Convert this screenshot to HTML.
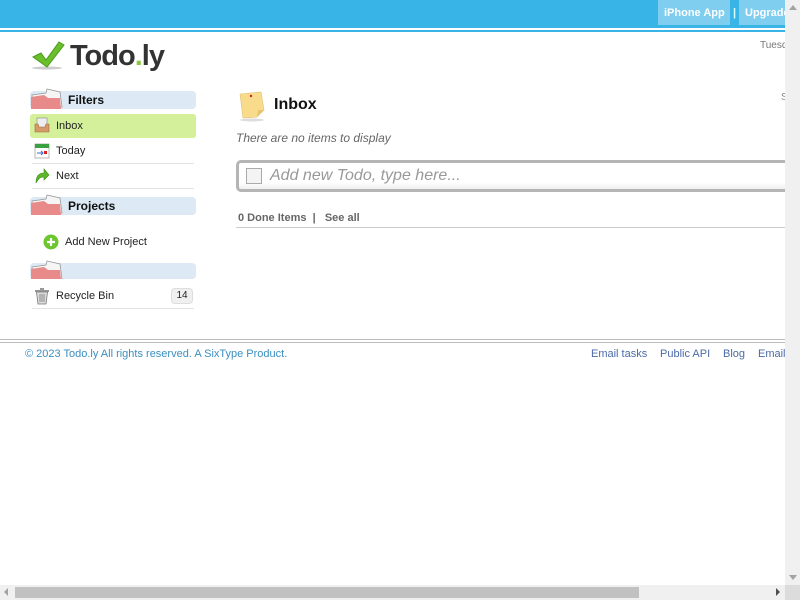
<!DOCTYPE html>
<html><head><meta charset="utf-8"><style>
*{margin:0;padding:0;box-sizing:border-box}
body{width:800px;height:600px;overflow:hidden;position:relative;background:#fff;font-family:"Liberation Sans",sans-serif;font-size:11px;color:#222}
.a{position:absolute;white-space:nowrap}
.hdr{position:absolute;left:30px;width:166px;height:18px;background:#dde9f4;border-radius:4px}
.hdr b{position:absolute;left:38px;top:2px;font-size:12px;color:#111}
.fold{position:absolute;left:0;top:-4px}
.sep{position:absolute;left:32px;width:162px;height:1px;background:#e3e3e3}
</style></head><body>
<div class="a" style="left:0;top:0;width:800px;height:28px;background:#39b4e6"></div>
<div class="a" style="left:0;top:30px;width:800px;height:2px;background:#39b4e6"></div>
<div class="a" style="left:658px;top:0;width:72px;height:25px;background:#7fcef0"></div>
<div class="a" style="left:739px;top:0;width:60px;height:25px;background:#7fcef0"></div>
<div class="a" style="left:664px;top:7px;color:#fff;font-weight:bold;font-size:11px">iPhone App</div>
<div class="a" style="left:733px;top:7px;color:#dff;font-weight:bold;font-size:11px">|</div>
<div class="a" style="left:745px;top:7px;color:#fff;font-weight:bold;font-size:11px">Upgrade</div>

<svg class="a" style="left:31px;top:40px" width="36" height="30"><ellipse cx="16" cy="28" rx="15" ry="1.5" fill="#ccc"/><path d="M2 17 L10 13 L15 20 L28 2 L33 5 L16 27 Z" fill="#6bbf2a" stroke="#4c9a1a" stroke-width="1"/></svg>
<div class="a" style="left:70px;top:40px;font-size:29px;font-weight:bold;color:#333;letter-spacing:-1px">Todo<span style="color:#8cc63f">.</span>ly</div>
<div class="a" style="left:760px;top:40px;color:#777;font-size:10px">Tuesday</div>
<div class="a" style="left:781px;top:92px;color:#888;font-size:10px">S</div>

<div class="hdr" style="top:91px"><svg class="fold" width="34" height="22"><path d="M3 20 L2 8 L16 6 L17 2 L30 5 L32 20 Z" fill="#f5f5f5" stroke="#999" stroke-width=".8"/><path d="M1 22 L1 10 L14 8 L18 11 L30 11 L31 22 Z" fill="#e88a8a"/></svg><b>Filters</b></div>
<div class="a" style="left:30px;top:114px;width:166px;height:24px;background:#d4f09a;border-radius:3px"></div>
<svg class="a" style="left:34px;top:117px" width="16" height="16"><rect x="3" y="1" width="10" height="10" fill="#eee" stroke="#888" stroke-width=".6"/><path d="M1 7 L4 7 L5 10 L11 10 L12 7 L15 7 L15 15 L1 15Z" fill="#d49a6a" stroke="#a06a40" stroke-width=".6"/></svg>
<div class="a" style="left:56px;top:120px">Inbox</div>
<svg class="a" style="left:34px;top:142px" width="16" height="17"><rect x="1" y="2" width="14" height="14" fill="#fff" stroke="#999" stroke-width=".7"/><rect x="1" y="2" width="14" height="4" fill="#3aa040"/><path d="M3 11 H9 M7 9 L9 11 L7 13" stroke="#3a6ad0" stroke-width="1" fill="none"/><rect x="10" y="9" width="3" height="3" fill="#d22"/></svg>
<div class="a" style="left:56px;top:145px">Today</div>
<div class="sep" style="top:163px"></div>
<svg class="a" style="left:34px;top:167px" width="16" height="17"><path d="M2 16 C2 9 5 6 10 6 L10 2 L15 8 L10 13 L10 10 C6 10 4 12 2 16Z" fill="#5cb82a" stroke="#3b8a18" stroke-width=".6"/></svg>
<div class="a" style="left:56px;top:170px">Next</div>
<div class="sep" style="top:188px"></div>

<div class="hdr" style="top:197px"><svg class="fold" width="34" height="22"><path d="M3 20 L2 8 L16 6 L17 2 L30 5 L32 20 Z" fill="#f5f5f5" stroke="#999" stroke-width=".8"/><path d="M1 22 L1 10 L14 8 L18 11 L30 11 L31 22 Z" fill="#e88a8a"/></svg><b>Projects</b></div>
<svg class="a" style="left:43px;top:234px" width="16" height="16"><circle cx="8" cy="8" r="7.5" fill="#6cc62e"/><path d="M8 4 V12 M4 8 H12" stroke="#fff" stroke-width="2.2"/></svg>
<div class="a" style="left:65px;top:236px">Add New Project</div>

<div class="hdr" style="top:263px;height:16px"><svg class="fold" width="34" height="20"><path d="M3 20 L2 8 L16 6 L17 2 L30 5 L32 20 Z" fill="#f5f5f5" stroke="#999" stroke-width=".8"/><path d="M1 20 L1 10 L14 8 L18 11 L30 11 L31 20 Z" fill="#e88a8a"/></svg></div>
<svg class="a" style="left:34px;top:287px" width="16" height="18"><rect x="1" y="3" width="14" height="2" fill="#999"/><rect x="6" y="1" width="4" height="2" fill="#999"/><path d="M2.5 5 L4 17 L12 17 L13.5 5Z" fill="#ddd" stroke="#777" stroke-width=".8"/><path d="M6 7 V15 M8 7 V15 M10 7 V15" stroke="#777" stroke-width=".8"/></svg>
<div class="a" style="left:56px;top:290px">Recycle Bin</div>
<div class="a" style="left:171px;top:288px;width:22px;height:16px;background:#f0f0f0;border:1px solid #ddd;border-radius:4px;text-align:center;line-height:14px;font-size:10px">14</div>
<div class="sep" style="top:308px"></div>

<svg class="a" style="left:237px;top:89px" width="30" height="34"><ellipse cx="15" cy="31" rx="12" ry="1.5" fill="#ddd"/><path d="M3 5 L24 3 L27 21 L20 28 L6 29 Z" fill="#f8dc8c" stroke="#e0c070" stroke-width=".6"/><path d="M27 21 L21 21 L20 28Z" fill="#e8c470"/><circle cx="14" cy="7" r="1.2" fill="#c22"/></svg>
<div class="a" style="left:274px;top:96px;font-size:16px;font-weight:bold;color:#111">Inbox</div>
<div class="a" style="left:236px;top:131px;font-size:12px;font-style:italic;color:#666">There are no items to display</div>
<div class="a" style="left:236px;top:160px;width:560px;height:32px;border:3px solid #b5b5b5;border-radius:5px;background:linear-gradient(#fff 75%,#eee)"></div>
<div class="a" style="left:246px;top:168px;width:16px;height:16px;border:1px solid #aaa;background:#f4f4f4"></div>
<div class="a" style="left:270px;top:167px;font-size:16px;font-style:italic;color:#999">Add new Todo, type here...</div>
<div class="a" style="left:238px;top:212px;font-weight:bold;color:#666">0 Done Items &nbsp;| &nbsp;&nbsp;See all</div>
<div class="a" style="left:236px;top:227px;width:560px;height:1px;background:#ccc"></div>

<div class="a" style="left:0;top:339px;width:800px;height:1px;background:#bbb"></div>
<div class="a" style="left:0;top:342px;width:800px;height:1px;background:#bbb"></div>
<div class="a" style="left:25px;top:348px;color:#3a8fc2">© 2023 Todo.ly All rights reserved. A SixType Product.</div>
<div class="a" style="left:591px;top:348px;color:#4a6aa8">Email tasks</div>
<div class="a" style="left:660px;top:348px;color:#4a6aa8">Public API</div>
<div class="a" style="left:723px;top:348px;color:#4a6aa8">Blog</div>
<div class="a" style="left:758px;top:348px;color:#4a6aa8">Email</div>

<div class="a" style="left:785px;top:0;width:15px;height:600px;background:#f0f0f0"></div>
<div class="a" style="left:789px;top:5px;width:0;height:0;border-left:4px solid transparent;border-right:4px solid transparent;border-bottom:5px solid #a3a3a3"></div>
<div class="a" style="left:789px;top:575px;width:0;height:0;border-left:4px solid transparent;border-right:4px solid transparent;border-top:5px solid #a3a3a3"></div>
<div class="a" style="left:0;top:585px;width:785px;height:15px;background:#f0f0f0"></div>
<div class="a" style="left:785px;top:585px;width:15px;height:15px;background:#dcdcdc"></div>
<div class="a" style="left:15px;top:587px;width:624px;height:11px;background:#c1c1c1"></div>
<div class="a" style="left:4px;top:588px;width:0;height:0;border-top:4px solid transparent;border-bottom:4px solid transparent;border-right:4px solid #a3a3a3"></div>
<div class="a" style="left:776px;top:588px;width:0;height:0;border-top:4px solid transparent;border-bottom:4px solid transparent;border-left:4px solid #505050"></div>
</body></html>
